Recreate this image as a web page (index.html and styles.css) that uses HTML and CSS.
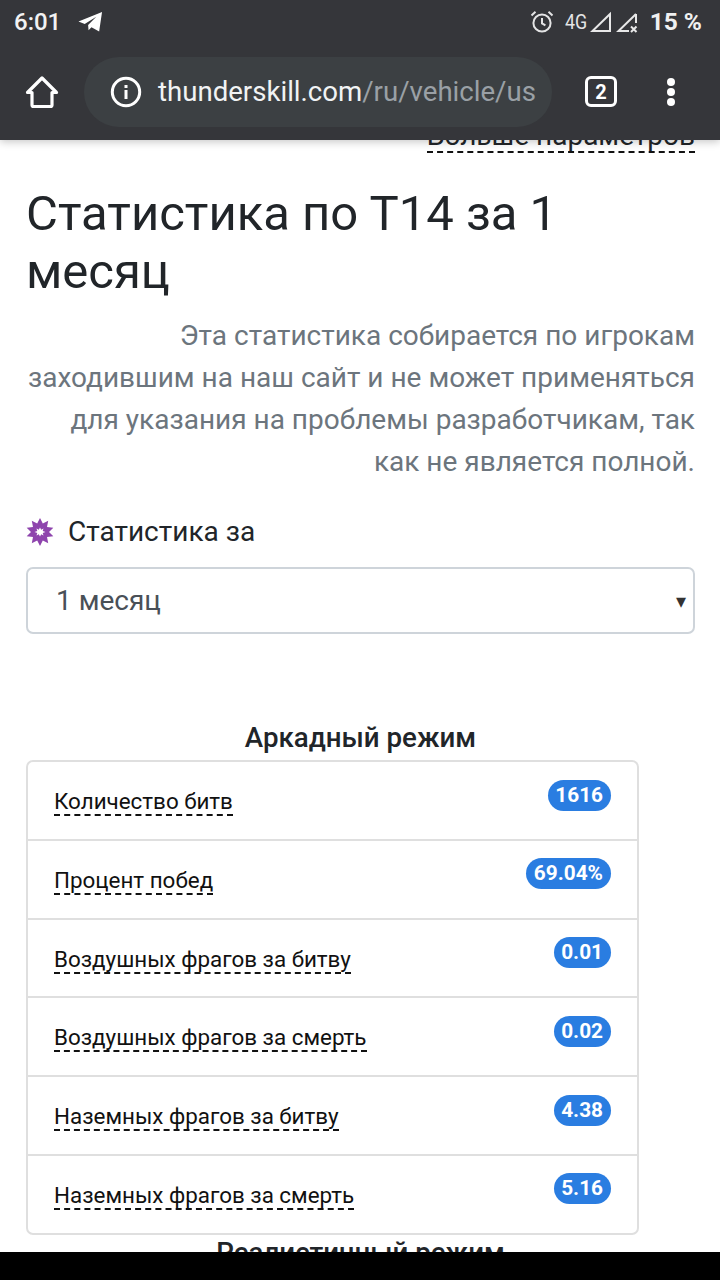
FILE: index.html
```html
<!DOCTYPE html>
<html lang="ru">
<head>
<meta charset="utf-8">
<title>Статистика по Т14</title>
<link rel="stylesheet" href="styles.css">
</head>
<body>
<div class="app">
  <header class="chrome">
    <div class="status">
      <div class="status-left">
        <span class="time">6:01</span>
        <svg class="ic-tg" viewBox="0 0 26 22"><path d="M0.5 10.5 L25 0.5 L22 21 L14 16.5 L11 19.5 L10.5 14 L19 5.5 L7 13 Z" fill="#fff"/></svg>
      </div>
      <div class="status-right">
        <svg class="ic-alarm" viewBox="0 0 24 24" fill="none" stroke="#e4e4e5" stroke-width="2"><circle cx="12" cy="13" r="8.6"/><path d="M12 8v5.4l3.4 2" /><path d="M1.5 5.5 5.5 1.8M22.5 5.5 18.5 1.8"/></svg>
        <span class="net">4G</span>
        <svg class="ic-sig" viewBox="0 0 22 22" fill="none" stroke="#e8e8e8" stroke-width="2"><path d="M20 3 L2.500 20 H20 Z"/></svg>
        <svg class="ic-sig2" viewBox="0 0 22 22" fill="none" stroke="#e8e8e8" stroke-width="2"><path d="M20 3 L2.500 20 H13"/><path d="M20 3 V12"/><path d="M15 15.500 L20.500 21 M20.500 15.500 L15 21"/></svg>
        <span class="batt">15 %</span>
      </div>
    </div>
    <div class="toolbar">
      <svg class="ic-home" viewBox="0 0 34 34" fill="none" stroke="#fff" stroke-width="3.200" stroke-linejoin="round"><path d="M17 3 L31.500 17.500 H27 V30 a1.500 1.500 0 0 1 -1.500 1.500 H8.500 A1.500 1.500 0 0 1 7 30 V17.500 H2.500 Z"/></svg>
      <div class="omnibox">
        <svg class="ic-info" viewBox="0 0 32 32"><circle cx="16" cy="16" r="13.700" fill="none" stroke="#fff" stroke-width="3"/><rect x="14.500" y="14" width="3" height="9" fill="#fff"/><rect x="14.500" y="9" width="3" height="3" fill="#fff"/></svg>
        <span class="url"><span class="host">thunderskill.com</span><span class="path">/ru/vehicle/us</span></span>
      </div>
      <span class="tabs">2</span>
      <span class="menu"><i></i><i></i><i></i></span>
    </div>
  </header>
  <main class="page">
    <div class="more-row"><a class="more">Больше параметров</a></div>
    <h2 class="title">Статистика по Т14 за 1 месяц</h2>
    <p class="note">Эта статистика собирается по игрокам заходившим на наш сайт и не может применяться для указания на проблемы разработчикам, так как не является полной.</p>
    <div class="period-label">
      <svg class="ic-star" viewBox="0 0 28 28"><path fill="#8e44ad" d="M14 0 16.800 5.400 22.230 2.670 21 8.900 27.310 9.670 23 14 27.310 18.330 21 19.100 22.230 25.330 16.800 22.600 14 28 11.200 22.600 5.770 25.330 7 19.100 .69 18.330 5 14 .69 9.670 7 8.900 5.770 2.670 11.200 5.400Z"/><path fill="#fff" d="M14 9.500l1.200 2.300 2.300-1.200-.8 2.500 2.800.9-2.800.9.8 2.500-2.300-1.200-1.200 2.300-1.200-2.300-2.300 1.200.8-2.500-2.800-.9 2.800-.9-.8-2.500 2.300 1.200z"/></svg>
      <span>Статистика за</span>
    </div>
    <div class="select"><span>1 месяц</span><span class="caret">▾</span></div>
    <h5 class="mode-title">Аркадный режим</h5>
    <ul class="list">
      <li><a>Количество битв</a><b>1616</b></li>
      <li><a>Процент побед</a><b>69.04%</b></li>
      <li><a>Воздушных фрагов за битву</a><b>0.01</b></li>
      <li><a>Воздушных фрагов за смерть</a><b>0.02</b></li>
      <li><a>Наземных фрагов за битву</a><b>4.38</b></li>
      <li><a>Наземных фрагов за смерть</a><b>5.16</b></li>
    </ul>
    <h5 class="mode-title next">Реалистичный режим</h5>
  </main>
  <div class="navbar"></div>
</div>
</body>
</html>
```
FILE: styles.css
```css
* { box-sizing: border-box; }
html, body { margin: 0; padding: 0; }
body { width: 720px; height: 1280px; overflow: hidden; background: #fff; font-family: Roboto, "Noto Sans", sans-serif; color: #212529; }
.app { display: flex; flex-direction: column; height: 1280px; }
.chrome { position: relative; z-index: 2; flex: 0 0 140px; background: #35363a; box-shadow: 0 2px 8px rgba(0,0,0,.22); color: #fff; }
.status { height: 43px; display: flex; justify-content: space-between; align-items: center; padding: 0 18px 0 14px; }
.status-left, .status-right { display: flex; align-items: center; }
.time { font-size: 24px; font-weight: 500; color: #f2f2f2; }
.ic-tg { width: 25px; height: 22px; margin-left: 17px; }
.ic-alarm { width: 24px; height: 24px; margin-right: 11px; }
.net { width: 24px; font-size: 21px; color: #e4e4e5; transform: scaleX(.85); transform-origin: left; margin-right: 1px; }
.ic-sig, .ic-sig2 { width: 22px; height: 22px; }
.ic-sig { margin-right: 4px; }
.batt { font-size: 24.500px; font-weight: 700; color: #f0f0f0; margin-left: 12px; }
.toolbar { display: flex; align-items: center; height: 97px; }
.ic-home { width: 34px; height: 34px; margin-left: 25px; }
.omnibox { margin-left: 25px; width: 468px; height: 70px; border-radius: 35px; background: #3c4043; display: flex; align-items: center; padding-left: 26px; overflow: hidden; }
.ic-info { width: 32px; height: 32px; flex: none; }
.url { margin-left: 16px; font-size: 27.600px; white-space: nowrap; }
.host { color: #f1f3f4; }
.path { color: #9aa0a6; }
.tabs { margin-left: 33px; width: 32px; height: 31px; border: 3px solid #fff; border-radius: 6px; display: flex; align-items: center; justify-content: center; font-size: 20px; font-weight: 700; color: #fff; }
.menu { margin-left: 50px; display: flex; flex-direction: column; gap: 2px; }
.menu i { width: 8px; height: 8px; border-radius: 50%; background: #fff; }
.page { flex: 1; min-height: 0; overflow: hidden; padding: 0 25px 0 26px; }
.more-row { margin-top: -19px; display: flex; justify-content: flex-end; }
.more { font-size: 28px; line-height: 30px; color: #212529; border-bottom: 2px dashed #111; }
.title { margin: 32px 0 0; font-size: 49px; line-height: 58px; font-weight: 400; color: #212529; }
.note { margin: 14px 0 0; font-size: 28px; line-height: 42px; text-align: right; color: #6c757d; }
.period-label { margin-top: 29px; display: flex; align-items: center; font-size: 28px; line-height: 40px; color: #212529; }
.ic-star { width: 28px; height: 28px; margin-right: 14px; }
.select { margin-top: 15px; height: 67px; border: 2px solid #ced4da; border-radius: 7px; display: flex; align-items: center; justify-content: space-between; padding: 0 7px 0 28px; font-size: 28px; color: #495057; }
.caret { font-size: 20px; color: #333; }
.mode-title { margin: 86px 0 0; text-align: center; font-size: 27.700px; line-height: 36px; font-weight: 500; color: #212529; }
.list { width: 612.500px; list-style: none; margin: 4px 0 0; padding: 0; border: 2px solid #dfdfdf; border-radius: 7px; }
.list li { height: 78.800px; display: flex; justify-content: space-between; align-items: flex-start; padding: 17.500px 26px 0 26px; border-bottom: 2px solid #dfdfdf; }
.list li:last-child { height: 77px; border-bottom: 0; }
.list a { margin-top: 8.500px; font-size: 22.400px; line-height: 26px; color: #111; border-bottom: 2px dashed #111; white-space: nowrap; }
.list b { height: 31px; padding: 0 7.500px; border-radius: 16px; background: #2a7de1; color: #fff; font-size: 20.800px; line-height: 31px; font-weight: 700; }
.mode-title.next { margin-top: 0; }
.navbar { flex: 0 0 28px; background: #000; }
```
